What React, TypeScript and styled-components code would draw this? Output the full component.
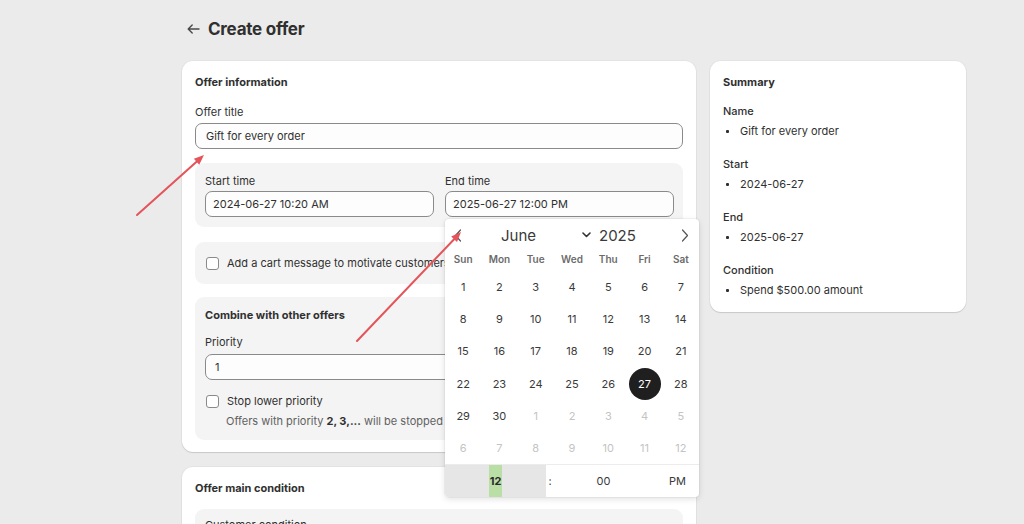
import React from "react";
import styled, { createGlobalStyle } from "styled-components";

const Global = createGlobalStyle`
  html, body { margin: 0; padding: 0; }
  body {
    background: #ebebeb;
    font-family: Inter, "Noto Sans", Arial, sans-serif;
    color: #303030;
    width: 1024px;
    height: 524px;
    overflow: hidden;
    -webkit-font-smoothing: antialiased;
  }
  * { box-sizing: border-box; }
`;

const Page = styled.div`
  position: relative;
  width: 1024px;
  height: 524px;
  padding: 17px 0 0 182px;
`;

const Header = styled.div`
  display: flex;
  align-items: center;
  gap: 8px;
  height: 24px;
  margin-left: 5px;
`;

const BackBtn = styled.span`
  display: flex;
  align-items: center;
  width: 13px;
  height: 24px;
  color: #4a4a4a;
`;

const Title = styled.h1`
  margin: 0;
  font-size: 17px;
  font-weight: 700;
  color: #303030;
  letter-spacing: -0.25px;
`;

const Columns = styled.div`
  display: flex;
  align-items: flex-start;
  gap: 14px;
  margin-top: 20px;
`;

const MainCol = styled.div`
  display: flex;
  flex-direction: column;
  gap: 15px;
  width: 514px;
`;

const Card = styled.section<{ $w?: number }>`
  background: #ffffff;
  border-radius: 11px;
  box-shadow: 0 1px 1px rgba(0, 0, 0, 0.12), 0 0 0 1px rgba(0, 0, 0, 0.03);
  padding: 13px 13px 12px;
  ${(p) => (p.$w ? `width: ${p.$w}px;` : "")}
`;

const CardTitle = styled.h2`
  margin: 0;
  font-size: 11px;
  line-height: 16px;
  font-weight: 700;
  color: #303030;
`;

const Label = styled.div<{ $mt?: number }>`
  font-size: 11px;
  line-height: 16px;
  color: #303030;
  margin-top: ${(p) => p.$mt ?? 0}px;
`;

const Input = styled.div<{ $pl?: number; $mt?: number }>`
  height: 26px;
  border: 1px solid #8a8a8a;
  border-radius: 7px;
  background: #fdfdfd;
  display: flex;
  align-items: center;
  padding-left: ${(p) => p.$pl ?? 8}px;
  font-size: 11px;
  color: #303030;
  margin-top: ${(p) => p.$mt ?? 2}px;
`;

const Section = styled.div<{ $mt: number; $pad?: string; $h?: number }>`
  background: #f4f4f4;
  border-radius: 9px;
  margin-top: ${(p) => p.$mt}px;
  padding: ${(p) => p.$pad ?? "10px"};
  ${(p) => (p.$h ? `height: ${p.$h}px;` : "")}
`;

const TwoCols = styled.div`
  display: grid;
  grid-template-columns: 229px 229px;
  column-gap: 11px;
`;

const Field = styled.div`
  position: relative;
`;

const CheckRow = styled.label<{ $mt?: number }>`
  display: flex;
  align-items: center;
  gap: 8px;
  font-size: 11px;
  line-height: 16px;
  color: #303030;
  white-space: nowrap;
  margin-top: ${(p) => p.$mt ?? 0}px;
  margin-left: 1px;
`;

const Box = styled.span`
  width: 13px;
  height: 13px;
  border: 1px solid #8a8a8a;
  border-radius: 3px;
  background: #fff;
  flex: none;
`;

const Help = styled.div`
  margin-left: 21px;
  margin-top: 4px;
  font-size: 11px;
  line-height: 16px;
  color: #616161;
  white-space: nowrap;
  b { font-weight: 700; color: #303030; }
`;

const SumGroup = styled.div<{ $mt: number }>`
  margin-top: ${(p) => p.$mt}px;
`;

const SumLabel = styled.div`
  font-size: 11px;
  line-height: 16px;
  font-weight: 500;
  color: #303030;
`;

const SumList = styled.ul`
  list-style: none;
  margin: 2px 0 0;
  padding: 0;
`;

const SumItem = styled.li`
  position: relative;
  font-size: 11px;
  line-height: 20px;
  padding-left: 17px;
  color: #303030;
  &::before {
    content: "";
    position: absolute;
    left: 3px;
    top: 9px;
    width: 3px;
    height: 3px;
    border-radius: 1px;
    background: #303030;
  }
`;

/* Calendar popover */
const Popover = styled.div`
  position: absolute;
  left: 0;
  top: 28px;
  width: 254px;
  background: #fff;
  border-radius: 4px;
  box-shadow: 0 2px 6px rgba(0, 0, 0, 0.12), 0 0 0 1px rgba(0, 0, 0, 0.035);
  z-index: 5;
  overflow: hidden;
`;

const CalHeader = styled.div`
  display: flex;
  align-items: center;
  height: 32px;
  padding: 0 8px 0 9px;
  color: #3a3a3a;
`;

const NavIcon = styled.span`
  display: flex;
  align-items: center;
  width: 10px;
  color: #555;
`;

const Month = styled.span`
  margin-left: 37px;
  font-size: 15px;
  color: #3a3a3a;
  width: 45px;
`;

const Caret = styled.span`
  display: flex;
  margin-left: 36px;
  color: #333;
`;

const Year = styled.span`
  margin-left: 8px;
  font-size: 15px;
  color: #3a3a3a;
  flex: 1;
`;

const Grid = styled.div`
  display: grid;
  grid-template-columns: repeat(7, 1fr);
`;

const WeekDay = styled.div`
  height: 16px;
  display: flex;
  align-items: center;
  justify-content: center;
  font-size: 10px;
  font-weight: 600;
  color: #6b6b6b;
  margin-bottom: 4px;
`;

const Day = styled.div<{ $muted?: boolean; $sel?: boolean }>`
  height: 32.2px;
  display: flex;
  align-items: center;
  justify-content: center;
  font-size: 11px;
  color: ${(p) => (p.$sel ? "#fff" : p.$muted ? "#c4c4c4" : "#3a3a3a")};
  span {
    width: 32px;
    height: 32px;
    border-radius: 50%;
    display: flex;
    align-items: center;
    justify-content: center;
    background: ${(p) => (p.$sel ? "#1f1f1f" : "transparent")};
  }
`;

const TimeRow = styled.div`
  display: grid;
  grid-template-columns: 101px 8px 99px 1fr;
  height: 33px;
  border-top: 1px solid #ececec;
  font-size: 11px;
  color: #3a3a3a;
`;

const HourCol = styled.div`
  background: #e6e6e6;
  display: flex;
  justify-content: center;
  align-items: stretch;
`;

const HourSel = styled.span`
  display: flex;
  align-items: center;
  padding: 0 1px;
  background: #b9dea6;
  font-weight: 700;
  color: #2a2a2a;
`;

const TimeCell = styled.div<{ $align?: string; $pr?: number }>`
  display: flex;
  align-items: center;
  justify-content: ${(p) => p.$align ?? "center"};
  padding-right: ${(p) => p.$pr ?? 0}px;
`;

const Overlay = styled.svg`
  position: absolute;
  left: 0;
  top: 0;
  pointer-events: none;
  z-index: 10;
`;

const weekdays = ["Sun", "Mon", "Tue", "Wed", "Thu", "Fri", "Sat"];

function buildDays() {
  const d: { n: number; muted: boolean }[] = [];
  for (let i = 1; i <= 30; i++) d.push({ n: i, muted: false });
  for (let i = 1; i <= 12; i++) d.push({ n: i, muted: true });
  return d;
}

function Arrow({ x1, y1, x2, y2 }: { x1: number; y1: number; x2: number; y2: number }) {
  const ang = Math.atan2(y2 - y1, x2 - x1);
  const len = 10;
  const w = 4;
  const bx = x2 - len * Math.cos(ang);
  const by = y2 - len * Math.sin(ang);
  const px = -Math.sin(ang) * w;
  const py = Math.cos(ang) * w;
  return (
    <g>
      <line x1={x1} y1={y1} x2={bx} y2={by} stroke="#e4545a" strokeWidth={2} strokeLinecap="round" />
      <polygon points={`${x2},${y2} ${bx + px},${by + py} ${bx - px},${by - py}`} fill="#e4545a" />
    </g>
  );
}

export default function App() {
  const days = buildDays();
  return (
    <>
      <Global />
      <Page>
        <Header>
          <BackBtn>
            <svg width="13" height="10" viewBox="0 0 13 10" fill="none">
              <path d="M12 5H1.5M5.2 1L1.2 5l4 4" stroke="currentColor" strokeWidth="1.4" strokeLinecap="round" strokeLinejoin="round" />
            </svg>
          </BackBtn>
          <Title>Create offer</Title>
        </Header>
        <Columns>
          <MainCol>
            <Card>
              <CardTitle>Offer information</CardTitle>
              <Label $mt={14}>Offer title</Label>
              <Input $pl={10} $mt={3}>Gift for every order</Input>
              <Section $mt={14}>
                <TwoCols>
                  <Field>
                    <Label>Start time</Label>
                    <Input $pl={7}>2024-06-27 10:20 AM</Input>
                  </Field>
                  <Field>
                    <Label>End time</Label>
                    <Field>
                      <Input $pl={7}>2025-06-27 12:00 PM</Input>
                      <Popover>
                        <CalHeader>
                          <NavIcon>
                            <svg width="8" height="13" viewBox="0 0 8 13" fill="none">
                              <path d="M6.5 1L1.5 6.5l5 5.5" stroke="currentColor" strokeWidth="1.2" strokeLinecap="round" strokeLinejoin="round" />
                            </svg>
                          </NavIcon>
                          <Month>June</Month>
                          <Caret>
                            <svg width="9" height="6" viewBox="0 0 9 6" fill="none">
                              <path d="M1 1l3.5 3.5L8 1" stroke="currentColor" strokeWidth="1.6" strokeLinecap="round" strokeLinejoin="round" />
                            </svg>
                          </Caret>
                          <Year>2025</Year>
                          <NavIcon>
                            <svg width="8" height="13" viewBox="0 0 8 13" fill="none">
                              <path d="M1.5 1l5 5.5-5 5.5" stroke="currentColor" strokeWidth="1.2" strokeLinecap="round" strokeLinejoin="round" />
                            </svg>
                          </NavIcon>
                        </CalHeader>
                        <Grid>
                          {weekdays.map((w) => (
                            <WeekDay key={w}>{w}</WeekDay>
                          ))}
                          {days.map((d, i) => (
                            <Day key={i} $muted={d.muted} $sel={!d.muted && d.n === 27}>
                              <span>{d.n}</span>
                            </Day>
                          ))}
                        </Grid>
                        <TimeRow>
                          <HourCol>
                            <HourSel>12</HourSel>
                          </HourCol>
                          <TimeCell>:</TimeCell>
                          <TimeCell>00</TimeCell>
                          <TimeCell $align="flex-end" $pr={13}>PM</TimeCell>
                        </TimeRow>
                      </Popover>
                    </Field>
                  </Field>
                </TwoCols>
              </Section>
              <Section $mt={15} $pad="13px 10px" $h={42}>
                <CheckRow>
                  <Box />
                  Add a cart message to motivate customers
                </CheckRow>
              </Section>
              <Section $mt={13} $pad="10px 10px 11px">
                <CardTitle>Combine with other offers</CardTitle>
                <Label $mt={11}>Priority</Label>
                <Input $pl={9} $mt={4}>1</Input>
                <CheckRow $mt={13}>
                  <Box />
                  Stop lower priority
                </CheckRow>
                <Help>
                  Offers with priority <b>2, 3,...</b> will be stopped if this offer is applied
                </Help>
              </Section>
            </Card>
            <Card>
              <CardTitle>Offer main condition</CardTitle>
              <Section $mt={13} $pad="8px 10px">
                <Label>Customer condition</Label>
              </Section>
            </Card>
          </MainCol>
          <Card $w={256}>
            <CardTitle>Summary</CardTitle>
            <SumGroup $mt={13}>
              <SumLabel>Name</SumLabel>
              <SumList>
                <SumItem>Gift for every order</SumItem>
              </SumList>
            </SumGroup>
            <SumGroup $mt={15}>
              <SumLabel>Start</SumLabel>
              <SumList>
                <SumItem>2024-06-27</SumItem>
              </SumList>
            </SumGroup>
            <SumGroup $mt={15}>
              <SumLabel>End</SumLabel>
              <SumList>
                <SumItem>2025-06-27</SumItem>
              </SumList>
            </SumGroup>
            <SumGroup $mt={15}>
              <SumLabel>Condition</SumLabel>
              <SumList>
                <SumItem>Spend $500.00 amount</SumItem>
              </SumList>
            </SumGroup>
          </Card>
        </Columns>
        <Overlay width="1024" height="524" viewBox="0 0 1024 524">
          <Arrow x1={137} y1={215} x2={204} y2={155} />
          <Arrow x1={357} y1={341} x2={461} y2={232} />
        </Overlay>
      </Page>
    </>
  );
}
